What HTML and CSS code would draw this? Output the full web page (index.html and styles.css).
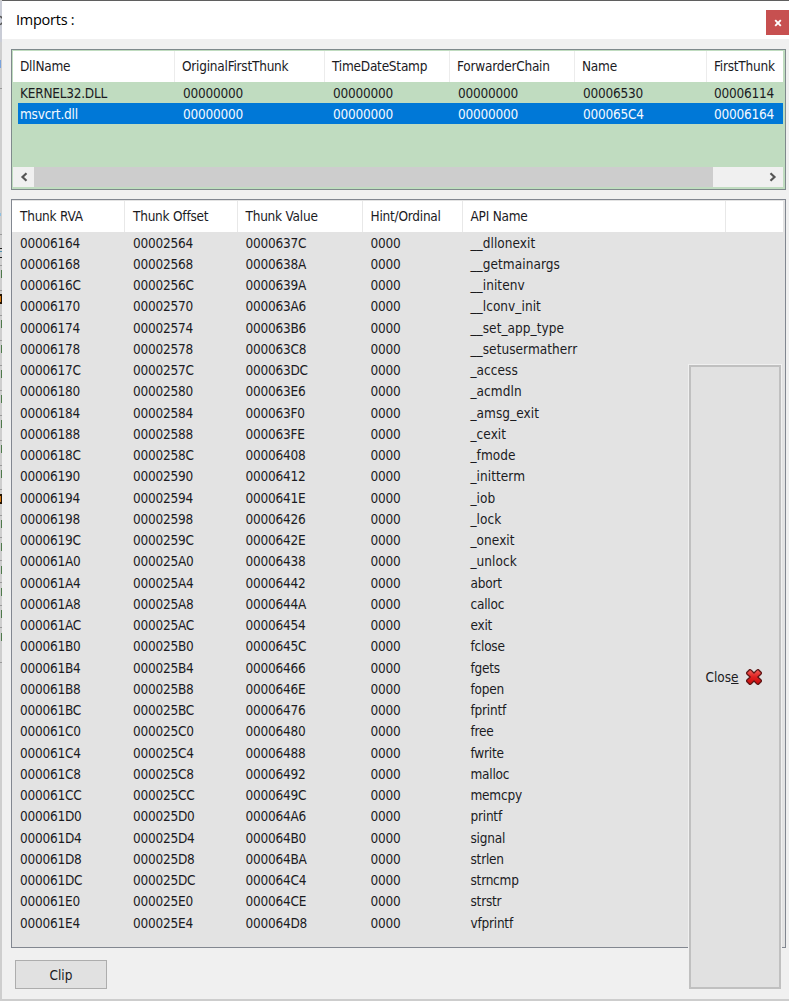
FILE: index.html
```html
<!DOCTYPE html>
<html lang="en">
<head>
<meta charset="utf-8">
<title>Imports</title>
<link rel="stylesheet" href="styles.css">
</head>
<body>
<div class="desktop">
  <svg class="behind" width="2" height="1001" viewBox="0 0 2 1001" aria-hidden="true">
    <rect width="2" height="1001" fill="#cecece"/>
    <path d="M0 1h2v41H0z" fill="#c9ccd6"/>
    <path d="M0 16.500q2 .5 2 2M0 24.500q2-.5 2-2" fill="none" stroke="#555" stroke-width="1.500"/>
    <path d="M0 60h1v8H0z" fill="#7ba3dc"/>
    <path d="M0 213h1v3H0z" fill="#8fc0e0"/>
    <path d="M0 88.500h2M0 234.500h2M0 265.500h2M0 290.500h2M0 315.500h2M0 340.500h2M0 365.500h2M0 390.500h2M0 415.500h2M0 440.500h2M0 465.500h2M0 489.500h2M0 515.500h2M0 537.500h2M0 560.500h2M0 582.500h2M0 605.500h2M0 627.500h2M0 662.500h2" stroke="#9a9a9a"/>
    <path d="M0 248.500h2M0 257.500h2" stroke="#222"/>
    <path d="M0 251.500h2" stroke="#4e8fae"/>
    <path d="M1.500 270v8M1.500 320v8M1.500 345v8M1.500 370v8M1.500 395v8M1.500 420v8M1.500 445v8M1.500 470v8M1.500 520v8M1.500 543v8M1.500 566v8M1.500 588v8M1.500 610v8M1.500 633v8" stroke="#4f7a4c"/>
    <path d="M0 294h2v10H0zM0 494h2v10H0z" fill="#241505"/>
    <path d="M0 296h1v6H0zM0 496h1v6H0z" fill="#d57913"/>
  </svg>
  <main class="window">
    <header class="titlebar">
      <h1 class="title">Imports :</h1>
      <button class="window-close" aria-label="Close window"><svg width="8" height="8" viewBox="0 0 8 8"><path d="M1.200 1.200l5.600 5.600M6.800 1.200L1.200 6.800" stroke="#fff" stroke-width="1.900"/></svg></button>
    </header>
    <section class="dll-list">
      <div class="dll-row dll-head"><span>DllName</span><span>OriginalFirstThunk</span><span>TimeDateStamp</span><span>ForwarderChain</span><span>Name</span><span>FirstThunk</span></div>
      <div class="dll-row"><span>KERNEL32.DLL</span><span>00000000</span><span>00000000</span><span>00000000</span><span>00006530</span><span>00006114</span></div>
      <div class="dll-row selected"><span>msvcrt.dll</span><span>00000000</span><span>00000000</span><span>00000000</span><span>000065C4</span><span>00006164</span></div>
      <div class="scrollbar">
        <svg class="arrow" width="21" height="20" viewBox="0 0 21 20"><path d="M13.500 6.200L9.500 10l4 3.800" fill="none" stroke="#555" stroke-width="2.200"/></svg>
        <div class="thumb"></div>
        <svg class="arrow" width="21" height="20" viewBox="0 0 21 20"><path d="M8.500 6.200l4 3.800-4 3.800" fill="none" stroke="#555" stroke-width="2.200"/></svg>
      </div>
    </section>
    <section class="thunk-list">
      <div class="thunk-row thunk-head"><span>Thunk RVA</span><span>Thunk Offset</span><span>Thunk Value</span><span>Hint/Ordinal</span><span>API Name</span><span></span></div>
      <div class="thunk-row"><span>00006164</span><span>00002564</span><span>0000637C</span><span>0000</span><span>__dllonexit</span></div>
      <div class="thunk-row"><span>00006168</span><span>00002568</span><span>0000638A</span><span>0000</span><span>__getmainargs</span></div>
      <div class="thunk-row"><span>0000616C</span><span>0000256C</span><span>0000639A</span><span>0000</span><span>__initenv</span></div>
      <div class="thunk-row"><span>00006170</span><span>00002570</span><span>000063A6</span><span>0000</span><span>__lconv_init</span></div>
      <div class="thunk-row"><span>00006174</span><span>00002574</span><span>000063B6</span><span>0000</span><span>__set_app_type</span></div>
      <div class="thunk-row"><span>00006178</span><span>00002578</span><span>000063C8</span><span>0000</span><span>__setusermatherr</span></div>
      <div class="thunk-row"><span>0000617C</span><span>0000257C</span><span>000063DC</span><span>0000</span><span>_access</span></div>
      <div class="thunk-row"><span>00006180</span><span>00002580</span><span>000063E6</span><span>0000</span><span>_acmdln</span></div>
      <div class="thunk-row"><span>00006184</span><span>00002584</span><span>000063F0</span><span>0000</span><span>_amsg_exit</span></div>
      <div class="thunk-row"><span>00006188</span><span>00002588</span><span>000063FE</span><span>0000</span><span>_cexit</span></div>
      <div class="thunk-row"><span>0000618C</span><span>0000258C</span><span>00006408</span><span>0000</span><span>_fmode</span></div>
      <div class="thunk-row"><span>00006190</span><span>00002590</span><span>00006412</span><span>0000</span><span>_initterm</span></div>
      <div class="thunk-row"><span>00006194</span><span>00002594</span><span>0000641E</span><span>0000</span><span>_iob</span></div>
      <div class="thunk-row"><span>00006198</span><span>00002598</span><span>00006426</span><span>0000</span><span>_lock</span></div>
      <div class="thunk-row"><span>0000619C</span><span>0000259C</span><span>0000642E</span><span>0000</span><span>_onexit</span></div>
      <div class="thunk-row"><span>000061A0</span><span>000025A0</span><span>00006438</span><span>0000</span><span>_unlock</span></div>
      <div class="thunk-row"><span>000061A4</span><span>000025A4</span><span>00006442</span><span>0000</span><span>abort</span></div>
      <div class="thunk-row"><span>000061A8</span><span>000025A8</span><span>0000644A</span><span>0000</span><span>calloc</span></div>
      <div class="thunk-row"><span>000061AC</span><span>000025AC</span><span>00006454</span><span>0000</span><span>exit</span></div>
      <div class="thunk-row"><span>000061B0</span><span>000025B0</span><span>0000645C</span><span>0000</span><span>fclose</span></div>
      <div class="thunk-row"><span>000061B4</span><span>000025B4</span><span>00006466</span><span>0000</span><span>fgets</span></div>
      <div class="thunk-row"><span>000061B8</span><span>000025B8</span><span>0000646E</span><span>0000</span><span>fopen</span></div>
      <div class="thunk-row"><span>000061BC</span><span>000025BC</span><span>00006476</span><span>0000</span><span>fprintf</span></div>
      <div class="thunk-row"><span>000061C0</span><span>000025C0</span><span>00006480</span><span>0000</span><span>free</span></div>
      <div class="thunk-row"><span>000061C4</span><span>000025C4</span><span>00006488</span><span>0000</span><span>fwrite</span></div>
      <div class="thunk-row"><span>000061C8</span><span>000025C8</span><span>00006492</span><span>0000</span><span>malloc</span></div>
      <div class="thunk-row"><span>000061CC</span><span>000025CC</span><span>0000649C</span><span>0000</span><span>memcpy</span></div>
      <div class="thunk-row"><span>000061D0</span><span>000025D0</span><span>000064A6</span><span>0000</span><span>printf</span></div>
      <div class="thunk-row"><span>000061D4</span><span>000025D4</span><span>000064B0</span><span>0000</span><span>signal</span></div>
      <div class="thunk-row"><span>000061D8</span><span>000025D8</span><span>000064BA</span><span>0000</span><span>strlen</span></div>
      <div class="thunk-row"><span>000061DC</span><span>000025DC</span><span>000064C4</span><span>0000</span><span>strncmp</span></div>
      <div class="thunk-row"><span>000061E0</span><span>000025E0</span><span>000064CE</span><span>0000</span><span>strstr</span></div>
      <div class="thunk-row"><span>000061E4</span><span>000025E4</span><span>000064D8</span><span>0000</span><span>vfprintf</span></div>
    </section>
    <button class="clip">Clip</button>
    <button class="close"><span>Clos<u>e</u></span>
      <svg width="18" height="18" viewBox="0 0 18 18"><defs><linearGradient id="red" x1="0" x2="0" y1="0" y2="1"><stop offset="0" stop-color="#f0635c"/><stop offset=".5" stop-color="#e02020"/><stop offset="1" stop-color="#c80c0c"/></linearGradient></defs><path d="M4.500 1.700q1-.4 1.700.4L9 5l2.800-2.900q.7-.8 1.700-.4l2.800 2.800q.4 1-.4 1.700L12.800 9l3.100 2.800q.8.700.4 1.700l-2.800 2.800q-1 .4-1.700-.4L9 13l-2.800 2.900q-.7.800-1.700.4l-2.800-2.800q-.4-1 .4-1.700L5.200 9 2.100 6.200q-.8-.7-.4-1.700z" fill="url(#red)" stroke="#5e1717" stroke-width="1.300" stroke-linejoin="round"/></svg>
    </button>
  </main>
</div>
</body>
</html>
```
FILE: styles.css
```css
* { box-sizing: border-box; }
body { margin: 0; }
button { font: inherit; color: inherit; padding: 0; }
.desktop {
  display: grid;
  grid-template-columns: 2px 787px;
  width: 789px;
  height: 1001px;
  overflow: hidden;
  background: #cdcdcd;
  font: 13.500px/21px "DejaVu Sans Condensed", "DejaVu Sans", sans-serif;
  font-stretch: condensed;
  letter-spacing: -0.230px;
  color: #1b1b1f;
}
.behind { display: block; }
.window {
  position: relative;
  display: flex;
  flex-direction: column;
  height: 999px;
  background: #f0f0f0;
  border-top: 1px solid #5f5f5f;
}
.titlebar {
  display: flex;
  justify-content: space-between;
  flex: none;
  height: 38px;
  background: #fff;
}
.title {
  margin: 8px 0 0 14px;
  font: 14.500px/21px "Open Sans", "Noto Sans", sans-serif;
  letter-spacing: -0.250px;
  color: #000;
}
.window-close {
  display: grid;
  place-items: center;
  width: 23px;
  height: 25px;
  margin-top: 9px;
  border: 0;
  background: #c75050;
}
.dll-list {
  display: flex;
  flex-direction: column;
  flex: none;
  width: 775px;
  height: 141px;
  margin: 10px 0 0 9px;
  padding: 1px 2px 1px 1px;
  border: 1px solid #7f8a8c;
  background: #c0dcc0;
}
.dll-row {
  display: grid;
  grid-template-columns: 163px 150px 125px 125px 131px 1fr;
  flex: none;
  height: 21px;
  margin-left: 5px;
  white-space: nowrap;
}
.dll-row span { padding-left: 2px; }
.dll-head {
  height: 31px;
  margin-left: 0;
  grid-template-columns: 162px 150px 125px 125px 132px 1fr;
  line-height: 31px;
  background: #fff;
}
.dll-head span { padding-left: 7px; border-right: 1px solid #ececec; }
.dll-head span:last-child { border: 0; }
.dll-row:not(.dll-head) { line-height: 22px; }
.dll-row:not(.dll-head) span:nth-child(n+2) { position: relative; }
.selected { background: #0078d7; color: #f4f9ff; }
.scrollbar {
  display: flex;
  flex: none;
  height: 20px;
  margin-top: auto;
  margin-bottom: 1px;
  background: #f0f0f0;
}
.arrow { flex: none; }
.thumb { width: 679px; margin-right: auto; background: #cdcdcd; }
.thunk-list {
  flex: none;
  width: 775px;
  height: 749px;
  margin: 9px 0 0 9px;
  padding: 1px 2px 1px 0;
  border: 1px solid #828790;
  background: #e3e3e3;
}
.thunk-row {
  display: grid;
  grid-template-columns: 113px 112.500px 125px 100px 263px 1fr;
  height: 21.250px;
  white-space: nowrap;
}
.thunk-row span { padding-left: 8px; }
.thunk-row:nth-child(n+2):nth-child(-n+17) span:nth-child(5) { letter-spacing: 0.050px; }
.thunk-row:nth-child(6) span:nth-child(5) { letter-spacing: 0.300px; }
.thunk-head {
  height: 31px;
  margin-bottom: 0.600px;
  line-height: 31px;
  background: #fff;
}
.thunk-head span { border-right: 1px solid #e8e8e8; }
.thunk-head span:last-child { border: 0; }
.clip {
  width: 92px;
  height: 29px;
  margin: 12px 0 0 13px;
  padding-top: 2px;
  border: 1px solid #adadad;
  background: #e1e1e1;
}
/* The close button lies over the lower right of the thunk list. */
.close {
  position: absolute;
  top: 364px;
  right: 8px;
  display: flex;
  align-items: center;
  justify-content: center;
  gap: 6px;
  width: 92px;
  height: 624px;
  padding-right: 2px;
  border: 2px solid #c0c0c0;
  outline: 1px solid #f0f0f0;
  background: #e1e1e1;
}
.close span { padding-top: 1px; }
.close svg { display: block; }
```
